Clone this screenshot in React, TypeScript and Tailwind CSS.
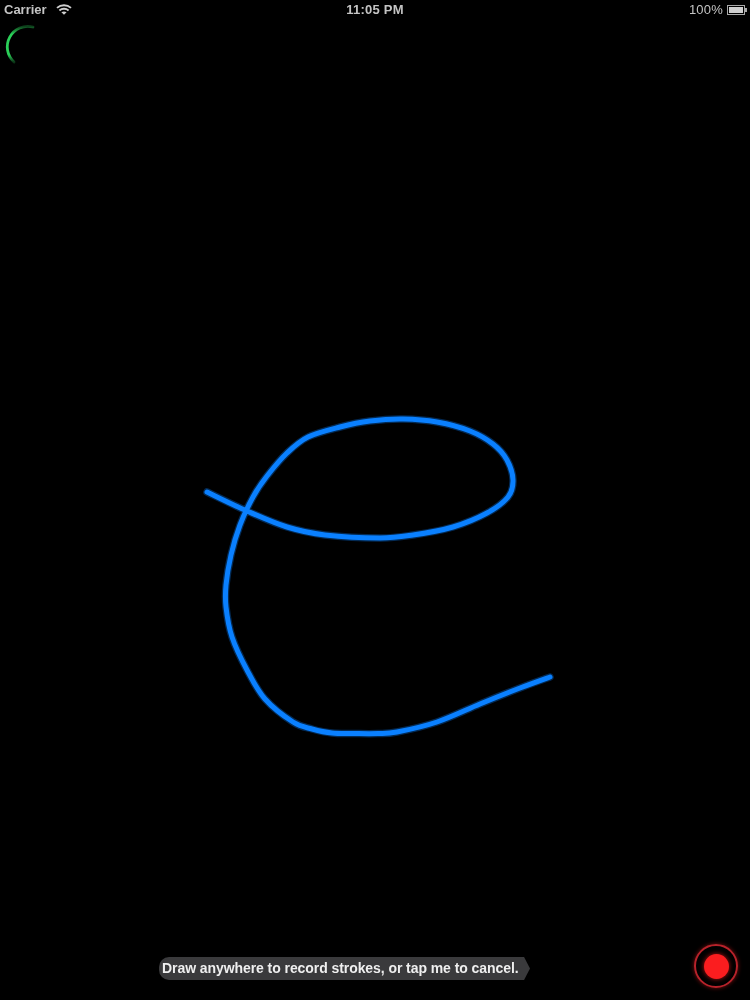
const STROKE: [number, number][] = [
  [207, 492], [247, 511], [287, 527], [325, 535], [380, 538], [413, 535], [453, 527], [487, 513],
  [508, 497], [513, 480], [507, 460], [493, 444], [470, 431], [437, 422], [403, 419], [370, 421],
  [340, 427], [308, 437], [287, 453], [267, 476], [253, 497], [240, 525], [231, 555], [226, 585],
  [226, 607], [232, 637], [247, 670], [265, 699], [293, 722], [312, 729], [332, 733], [355, 733.5],
  [378, 733.5], [397, 732], [437, 722], [480, 704], [520, 688], [550, 677],
]

// catmull-rom through the sampled points
function smoothPath(pts: [number, number][]) {
  let d = `M${pts[0][0]} ${pts[0][1]}`
  for (let i = 0; i < pts.length - 1; i++) {
    const p0 = pts[Math.max(i - 1, 0)]
    const p1 = pts[i]
    const p2 = pts[i + 1]
    const p3 = pts[Math.min(i + 2, pts.length - 1)]
    const c1x = p1[0] + (p2[0] - p0[0]) / 6
    const c1y = p1[1] + (p2[1] - p0[1]) / 6
    const c2x = p2[0] - (p3[0] - p1[0]) / 6
    const c2y = p2[1] - (p3[1] - p1[1]) / 6
    d += ` C${c1x.toFixed(1)} ${c1y.toFixed(1)} ${c2x.toFixed(1)} ${c2y.toFixed(1)} ${p2[0]} ${p2[1]}`
  }
  return d
}

function WifiIcon() {
  return (
    <svg width="16" height="11" viewBox="0 0 16 11" fill="none" stroke="#cfcfcf" strokeWidth="1.9">
      <path d="M1 3.9C5 0.4 11 0.4 15 3.9" />
      <path d="M3.4 6.4C6 4.2 10 4.2 12.6 6.4" />
      <path d="M8 10.8L5.4 8.2C7 7.1 9 7.1 10.6 8.2Z" fill="#cfcfcf" stroke="none" />
    </svg>
  )
}

function Battery() {
  return (
    <div className="flex items-center">
      <div className="w-[18px] h-[10px] border border-[#a8a8a8] p-px">
        <div className="w-full h-full bg-[#cfcfcf]" />
      </div>
      <div className="w-[2px] h-[4px] bg-[#a8a8a8]" />
    </div>
  )
}

function Spinner() {
  return (
    <svg width="40" height="46" viewBox="0 0 40 46" fill="none">
      <defs>
        <linearGradient id="arc" x1="0" y1="0" x2="0" y2="1">
          <stop offset="0" stopColor="#2ad058" stopOpacity="0.3" />
          <stop offset="0.22" stopColor="#2ad058" />
          <stop offset="0.8" stopColor="#2ad058" />
          <stop offset="1" stopColor="#2ad058" stopOpacity="0.25" />
        </linearGradient>
      </defs>
      <path d="M32 7A20.5 20.5 0 0 0 13 42" stroke="url(#arc)" strokeWidth="2.8" strokeLinecap="round" />
    </svg>
  )
}

export default function App() {
  return (
    <div className="relative w-[750px] h-[1000px] bg-black overflow-hidden flex flex-col justify-between font-['Liberation_Sans',Arial,sans-serif]">
      {/* the drawn stroke, free canvas */}
      <svg className="absolute inset-0" width="750" height="1000" viewBox="0 0 750 1000" fill="none">
        <path d={smoothPath(STROKE)} stroke="#0a78f0" strokeOpacity="0.35" strokeWidth="7.5" strokeLinecap="round" strokeLinejoin="round" />
        <path d={smoothPath(STROKE)} stroke="#0a80ff" strokeWidth="5" strokeLinecap="round" strokeLinejoin="round" />
      </svg>

      <div className="relative">
        <div className="h-[19px] px-[3px] grid grid-cols-3 items-center text-[13px] font-bold text-[#c4c4c4] blur-[0.3px]">
          <div className="flex items-center gap-[9px] pl-[1px]">
            <span>Carrier</span>
            <WifiIcon />
          </div>
          <div className="text-center tracking-[0.25px]">11:05 PM</div>
          <div className="flex items-center justify-end gap-[4px]">
            <span className="font-normal tracking-[0.2px]">100%</span>
            <Battery />
          </div>
        </div>
        <div className="pl-[1px] pt-[1px]">
          <Spinner />
        </div>
      </div>

      <div className="relative h-[70px] pl-[159px] pr-[12px] flex items-start">
        <div className="mt-[27px] flex items-stretch h-[23px]">
          <div className="w-[364px] rounded-l-[10px] bg-[#3a3a3c] pl-[3px] flex items-center text-[14px] font-bold tracking-[-0.07px] text-[#efefef] whitespace-nowrap blur-[0.2px]">
            Draw anywhere to record strokes, or tap me to cancel.
          </div>
          <div className="w-[7px] bg-[#3a3a3c] [clip-path:polygon(0_0,15%_0,100%_50%,15%_100%,0_100%)]" />
        </div>
        <div className="ml-auto mt-[14px] w-[44px] h-[44px] rounded-full border-[2.5px] border-[#b8222a] shadow-[0_0_4px_#7a1010] flex items-center justify-center">
          <div className="w-[25px] h-[25px] rounded-full bg-[#fb1d1f] shadow-[0_0_5px_#c01515]" />
        </div>
      </div>
    </div>
  )
}
